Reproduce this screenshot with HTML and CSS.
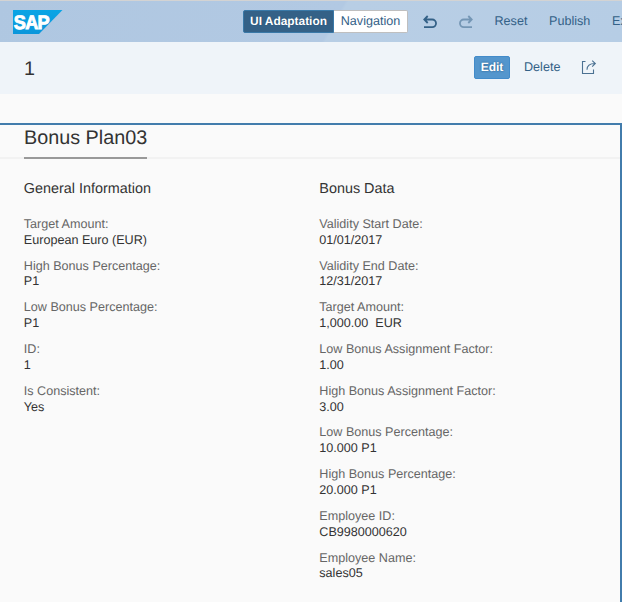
FILE: index.html
```
<!DOCTYPE html>
<html lang="en">
<head>
<meta charset="utf-8">
<title>Bonus Plan</title>
<link rel="stylesheet" href="styles.css">
</head>
<body>
<header class="shell">
  <svg class="logo" width="50" height="24" viewBox="0 0 50 24">
    <defs><linearGradient id="g" x1="0" y1="0" x2="0" y2="1"><stop offset="0" stop-color="#0aa5e5"/><stop offset="1" stop-color="#0b96db"/></linearGradient></defs>
    <path d="M0 0H49.500L26 24H0Z" fill="url(#g)"/>
    <text x="0.800" y="19" textLength="35" lengthAdjust="spacingAndGlyphs" class="logo-text">SAP</text>
  </svg>
  <div class="modes"><span class="mode mode-on">UI Adaptation</span><span class="mode mode-off">Navigation</span></div>
  <svg class="undo" width="14" height="14" viewBox="0 0 14 14"><path d="M4.700 1L1.300 4.500L4.700 8M1.500 4.500H9.200a3.700 3.700 0 0 1 0 7.700H1"/></svg>
  <svg class="redo" width="14" height="14" viewBox="0 0 14 14"><path d="M9.300 1L12.700 4.500L9.300 8M12.500 4.500H4.800a3.700 3.700 0 0 0 0 7.700H13"/></svg>
  <span class="link reset">Reset</span>
  <span class="link publish">Publish</span>
  <span class="link exit">Exit</span>
</header>
<div class="object-header">
  <h1 class="object-title">1</h1>
  <span class="edit">Edit</span>
  <span class="link delete">Delete</span>
  <svg class="share" width="16" height="15" viewBox="0 0 16 15"><path d="M4.500 1.500H1.500V13.500H12.500V9.500M6 9.700C6 5.600 8.500 3.500 14 3.500M11.200 0.700L14.300 3.500L11.200 6.600"/></svg>
</div>
<main class="section">
  <div class="section-head"><h2 class="section-title">Bonus Plan03</h2></div>
  <div class="groups">
    <section class="group">
      <h3 class="group-title">General Information</h3>
      <dl class="fields">
        <div class="field"><dt>Target Amount:</dt><dd>European Euro (EUR)</dd></div>
        <div class="field"><dt>High Bonus Percentage:</dt><dd>P1</dd></div>
        <div class="field"><dt>Low Bonus Percentage:</dt><dd>P1</dd></div>
        <div class="field"><dt>ID:</dt><dd>1</dd></div>
        <div class="field"><dt>Is Consistent:</dt><dd>Yes</dd></div>
      </dl>
    </section>
    <section class="group">
      <h3 class="group-title">Bonus Data</h3>
      <dl class="fields">
        <div class="field"><dt>Validity Start Date:</dt><dd>01/01/2017</dd></div>
        <div class="field"><dt>Validity End Date:</dt><dd>12/31/2017</dd></div>
        <div class="field"><dt>Target Amount:</dt><dd>1,000.00&nbsp; EUR</dd></div>
        <div class="field"><dt>Low Bonus Assignment Factor:</dt><dd>1.00</dd></div>
        <div class="field"><dt>High Bonus Assignment Factor:</dt><dd>3.00</dd></div>
        <div class="field"><dt>Low Bonus Percentage:</dt><dd>10.000 P1</dd></div>
        <div class="field"><dt>High Bonus Percentage:</dt><dd>20.000 P1</dd></div>
        <div class="field"><dt>Employee ID:</dt><dd>CB9980000620</dd></div>
        <div class="field"><dt>Employee Name:</dt><dd>sales05</dd></div>
      </dl>
    </section>
  </div>
</main>
</body>
</html>
```
FILE: styles.css
```
* { box-sizing: border-box; margin: 0; padding: 0; }
html, body { width: 622px; height: 602px; overflow: hidden; }
body {
  display: flex;
  flex-direction: column;
  background: #fafafa;
  color: #333;
  font-family: "Liberation Sans", Arial, sans-serif;
  font-size: 12.6px;
  text-rendering: geometricPrecision;
}
h1, h2, h3 { font-weight: 400; }
.shell {
  flex: none;
  display: flex;
  align-items: flex-start;
  height: 42px;
  padding: 9px 0 0 13px;
  overflow: hidden;
  white-space: nowrap;
  border-top: 1px solid #d3d3d3;
  background: linear-gradient(120deg, #afc7e1 0%, #b2c9e3 53.5%, #b8cee5 54%, #b6cde5 100%);
}
.logo { flex: none; margin-right: 180px; }
.logo-text { font-size: 19.5px; font-weight: 700; letter-spacing: -.8px; fill: #fff; stroke: #fff; stroke-width: .9px; }
.modes { flex: none; display: flex; width: 165px; height: 23px; margin-right: 15px; }
.mode { line-height: 20px; text-align: center; border: 1px solid #3a79a8; }
.mode-on {
  width: 91px;
  color: #fff;
  font-weight: 700;
  background: #346187;
  border-radius: 2px 0 0 2px;
  text-shadow: 0 0 1px #1e4566;
  font-size: 11.9px;
}
.mode-off { width: 74px; color: #346187; background: #fff; border-color: #bfbfbf; border-left: 0; border-radius: 0 2px 2px 0; }
.undo, .redo { flex: none; margin-top: 5px; fill: none; stroke: #346187; stroke-width: 1.8; }
.undo { margin-left: -.5px; }
.redo { margin-left: 22px; opacity: .5; }
.link { flex: none; color: #346187; line-height: 22px; }
.reset { margin-left: 22px; width: 54.5px; }
.publish { width: 63px; }
.object-header {
  flex: none;
  display: flex;
  height: 52px;
  padding: 14px 0 0 24px;
  background: #eff4f9;
}
.object-title { width: 450px; font-size: 19.8px; line-height: 27px; }
.edit {
  width: 36px;
  height: 23px;
  margin-right: 14px;
  color: #fff;
  font-size: 12px;
  font-weight: 700;
  line-height: 20px;
  text-align: center;
  background: #5496cd;
  border: 1px solid #428bca;
  border-radius: 2px;
  text-shadow: 0 0 2px #1f4f78;
}
.delete { width: 57px; }
.share { margin-top: 4px; fill: none; stroke: #4b7192; stroke-width: 1.1; }
.section {
  flex: 1;
  margin-top: 29px;
  border-top: 2px solid #427cac;
  border-right: 2px solid #427cac;
}
.section-head { height: 34px; padding-left: 24px; border-bottom: 2px solid #f2f2f2; }
.section-title {
  width: 123px;
  height: 34px;
  font-size: 19.8px;
  line-height: 26px;
  white-space: nowrap;
  border-bottom: 2px solid #999;
}
.groups { display: grid; grid-template-columns: 295.500px 1fr; padding: 20px 0 0 23.800px; }
.group-title { font-size: 14.4px; line-height: 20px; }
.fields { display: grid; gap: 10.100px; margin-top: 18px; }
.field { line-height: 15.800px; }
dt { color: #666; }
dd { color: #333; }
```
